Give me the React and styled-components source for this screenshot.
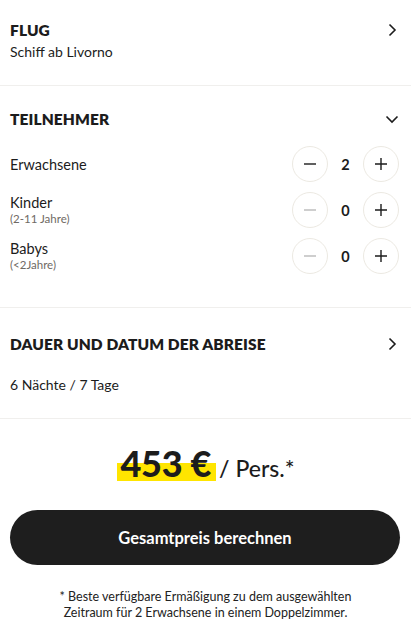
import React from "react";
import styled, { createGlobalStyle } from "styled-components";

const Global = createGlobalStyle`
  body {
    margin: 0;
    background: #ffffff;
    font-family: Lato, "Noto Sans", sans-serif;
    color: #1c1c1c;
  }
`;

const Page = styled.div`
  width: 411px;
  display: flex;
  flex-direction: column;
`;

const Section = styled.section`
  border-bottom: 1px solid #f0efed;
  padding: ${(p) => p.$pad || "20px 12px 24px 10px"};
`;

const Head = styled.div`
  display: flex;
  align-items: center;
  justify-content: space-between;
`;

const Title = styled.h2`
  margin: 0;
  font-size: 15.5px;
  font-weight: 800;
  letter-spacing: 0.1px;
  line-height: 20px;
`;

const Sub = styled.div`
  font-size: 14px;
  line-height: 18px;
  margin-top: ${(p) => p.$mt || "3px"};
`;

const Rows = styled.div`
  display: flex;
  flex-direction: column;
  gap: 10px;
  margin-top: 17px;
`;

const Row = styled.div`
  display: flex;
  align-items: center;
  justify-content: space-between;
  height: 36px;
`;

const Label = styled.div`
  display: flex;
  flex-direction: column;
  font-size: 14.5px;
  line-height: 17px;
`;

const Hint = styled.span`
  font-size: 11.5px;
  color: #6f6a64;
  line-height: 14px;
  margin-top: 1px;
`;

const Counter = styled.div`
  display: flex;
  align-items: center;
`;

const Circle = styled.button`
  width: 36px;
  height: 36px;
  border-radius: 50%;
  border: 1px solid #ece9e2;
  background: #fff;
  display: flex;
  align-items: center;
  justify-content: center;
  padding: 0;
  color: ${(p) => (p.$off ? "#b9b9b9" : "#1c1c1c")};
`;

const Count = styled.span`
  width: 35px;
  text-align: center;
  font-size: 14.5px;
  font-weight: 700;
`;

const Price = styled.div`
  display: flex;
  justify-content: center;
  align-items: baseline;
  margin-top: 22px;
  gap: 3px;
`;

const Amount = styled.span`
  font-size: 36px;
  font-weight: 900;
  letter-spacing: -0.3px;
  line-height: 44px;
  padding: 0 5px 0 4px;
  background: linear-gradient(to bottom, transparent 50%, #ffe500 50%, #ffe500 92%, transparent 92%);
`;

const Per = styled.span`
  font-size: 23px;
  font-weight: 500;
`;

const Button = styled.button`
  margin: 25px 11px 0 10px;
  height: 55px;
  border: none;
  border-radius: 28px;
  background: #1e1e1e;
  color: #fff;
  font-family: inherit;
  font-size: 16.5px;
  font-weight: 700;
`;

const Note = styled.p`
  margin: 24px 0 0;
  text-align: center;
  font-size: 12.5px;
  line-height: 16px;
  color: #222;
`;

const ChevronRight = () => (
  <svg width="14" height="14" viewBox="0 0 14 14" fill="none">
    <path d="M4.5 1.5 L10 7 L4.5 12.5" stroke="#1c1c1c" strokeWidth="1.6" />
  </svg>
);

const ChevronDown = () => (
  <svg width="14" height="14" viewBox="0 0 14 14" fill="none">
    <path d="M1.5 4.5 L7 10 L12.5 4.5" stroke="#1c1c1c" strokeWidth="1.6" />
  </svg>
);

const Minus = () => (
  <svg width="14" height="14" viewBox="0 0 14 14">
    <path d="M1 7 H13" stroke="currentColor" strokeWidth="1.4" />
  </svg>
);

const Plus = () => (
  <svg width="14" height="14" viewBox="0 0 14 14">
    <path d="M1 7 H13 M7 1 V13" stroke="currentColor" strokeWidth="1.4" />
  </svg>
);

const people = [
  { label: "Erwachsene", count: 2 },
  { label: "Kinder", hint: "(2-11 Jahre)", count: 0 },
  { label: "Babys", hint: "(<2Jahre)", count: 0 },
];

export default function App() {
  return (
    <Page>
      <Global />
      <Section $pad="20px 12px 24px 10px">
        <Head>
          <Title>FLUG</Title>
          <ChevronRight />
        </Head>
        <Sub>Schiff ab Livorno</Sub>
      </Section>

      <Section $pad="23px 12px 33px 10px">
        <Head>
          <Title>TEILNEHMER</Title>
          <ChevronDown />
        </Head>
        <Rows>
          {people.map((p) => (
            <Row key={p.label}>
              <Label>
                {p.label}
                {p.hint && <Hint>{p.hint}</Hint>}
              </Label>
              <Counter>
                <Circle $off={p.count === 0}>
                  <Minus />
                </Circle>
                <Count>{p.count}</Count>
                <Circle>
                  <Plus />
                </Circle>
              </Counter>
            </Row>
          ))}
        </Rows>
      </Section>

      <Section $pad="26px 12px 24px 10px">
        <Head>
          <Title>DAUER UND DATUM DER ABREISE</Title>
          <ChevronRight />
        </Head>
        <Sub $mt="22px">6 Nächte / 7 Tage</Sub>
      </Section>

      <Price>
        <Amount>453 €</Amount>
        <Per>/ Pers.*</Per>
      </Price>
      <Button>Gesamtpreis berechnen</Button>
      <Note>
        * Beste verfügbare Ermäßigung zu dem ausgewählten
        <br />
        Zeitraum für 2 Erwachsene in einem Doppelzimmer.
      </Note>
    </Page>
  );
}
